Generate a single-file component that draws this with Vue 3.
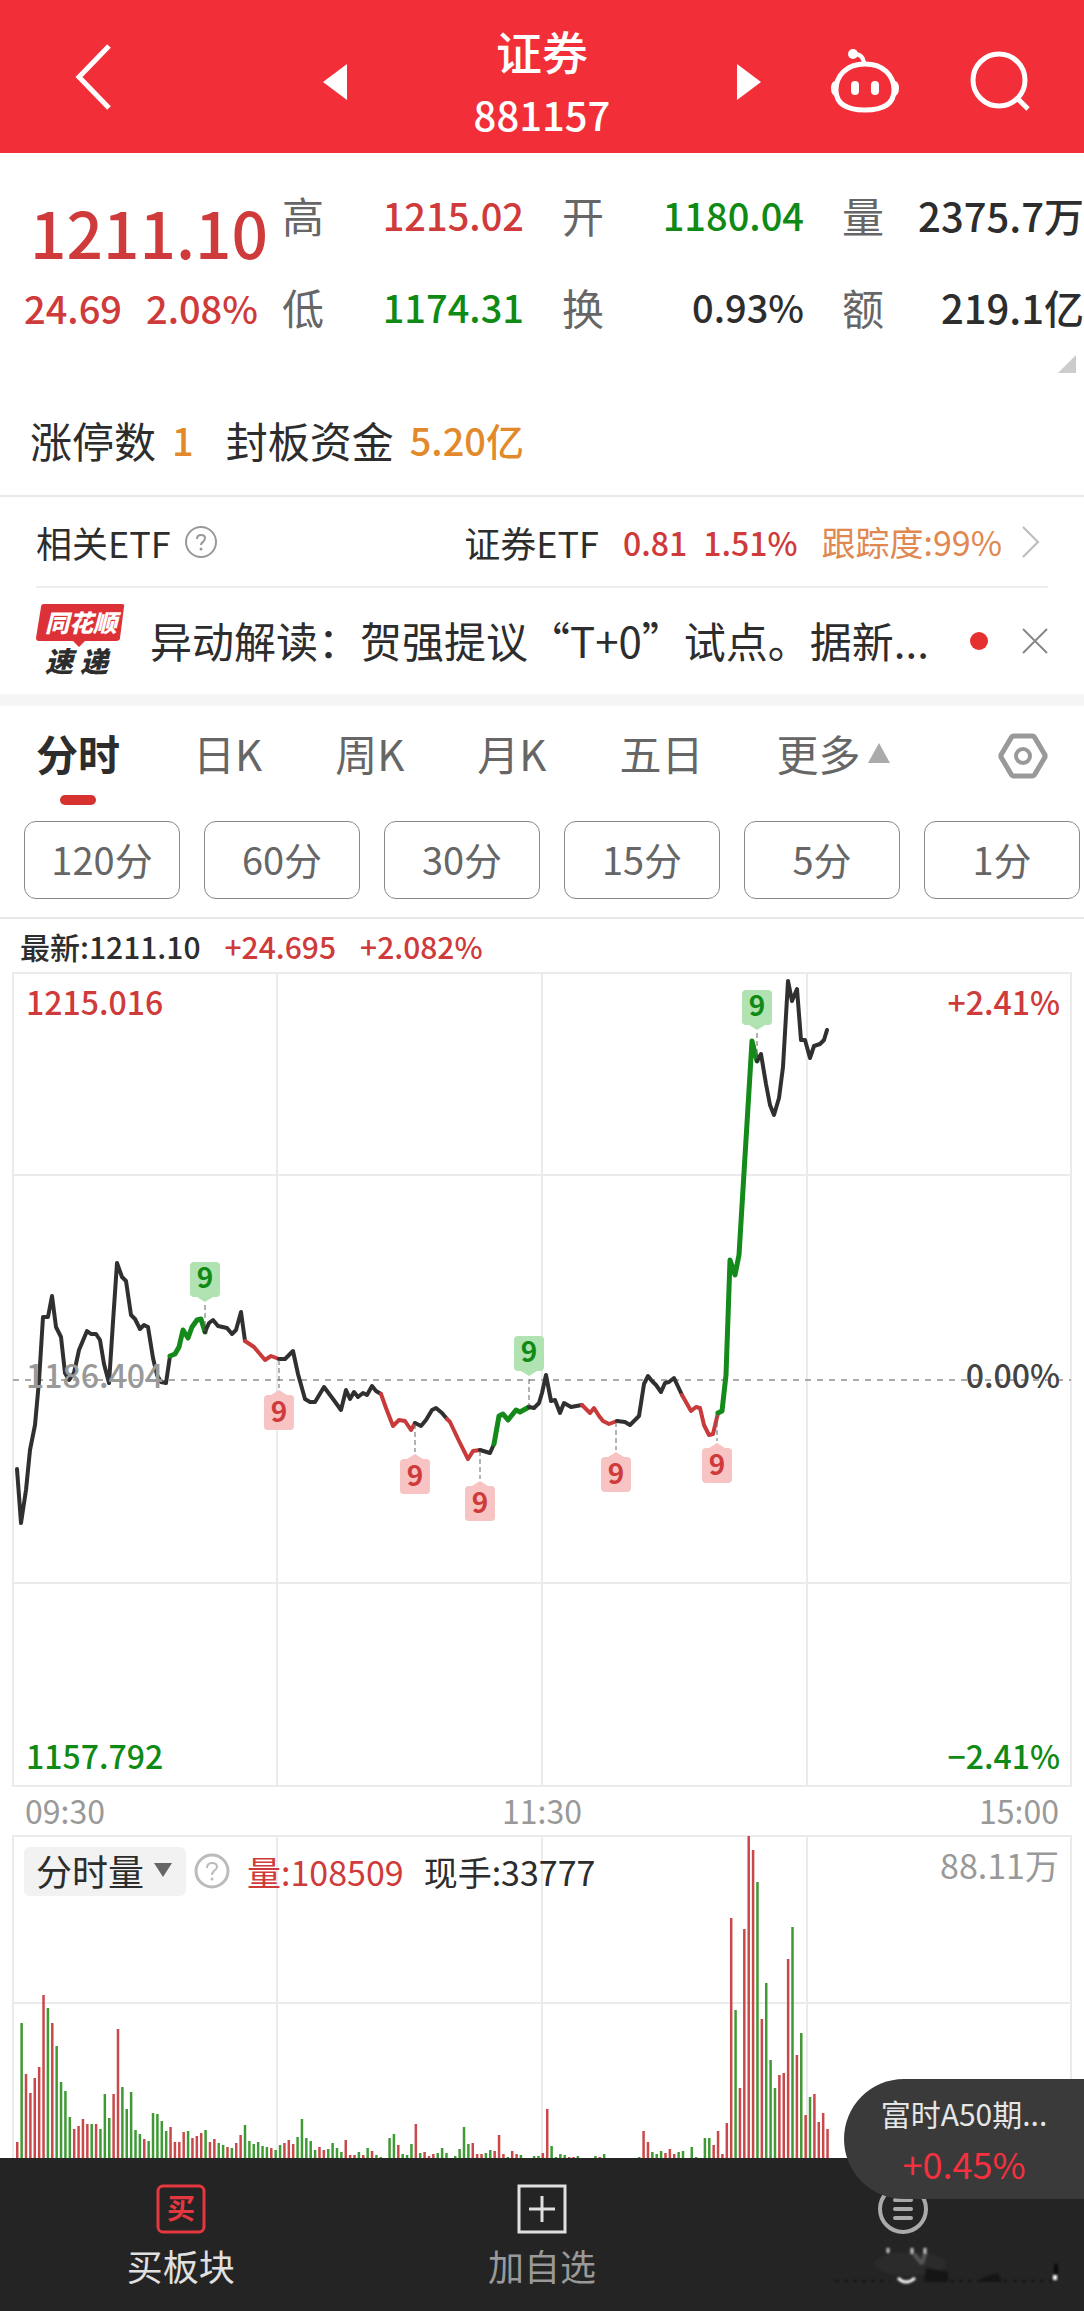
<script setup>
import { ref } from "vue";

const quotes = [
  { label: "高", value: "1215.02", tone: "up" },
  { label: "开", value: "1180.04", tone: "down" },
  { label: "量", value: "2375.7万", tone: "unit" },
  { label: "低", value: "1174.31", tone: "down" },
  { label: "换", value: "0.93%", tone: "" },
  { label: "额", value: "219.1亿", tone: "unit" },
];

const tabs = ["分时", "日K", "周K", "月K", "五日"];
const activeTab = ref("分时");
const periods = ["120分", "60分", "30分", "15分", "5分", "1分"];
const indicator = ref("分时量");

// 分时线，每段一个颜色
const segments = [
  {
    tone: "flat",
    points:
      "4,496 8,550 13,517 17,477 22,452 26,408 30,344 35,344 39,323 43,354 48,364 52,400 56,407 61,400 66,377 74,358 78,361 83,361 87,367 91,391 96,410 100,349 104,290 109,304 113,308 118,342 122,346 127,356 131,352 135,354 140,385 144,402 148,409 153,410 157,383",
  },
  {
    tone: "down",
    points: "157,383 162,381 166,374 170,357 175,365 179,354 184,347 188,346 192,359",
  },
  {
    tone: "flat",
    points: "192,359 196,350 200,347 205,353 214,355 219,361 223,357 228,339 232,368",
  },
  { tone: "up", points: "232,368 241,374 252,387 258,383 266,386" },
  {
    tone: "flat",
    points:
      "266,386 272,386 280,378 285,401 292,426 297,429 302,429 311,414 320,426 328,437 333,417 337,426 341,419 345,424 350,420 354,422 359,413 363,418 368,421",
  },
  { tone: "up", points: "368,421 373,435 380,453 386,447 392,448 398,457 402,450" },
  { tone: "flat", points: "402,450 408,453 413,447 419,437 423,435 429,440 434,446" },
  { tone: "up", points: "434,446 437,449 446,468 455,486 460,478 467,477" },
  { tone: "flat", points: "467,477 477,480 481,471" },
  { tone: "down", points: "481,471 486,443 490,441 495,447 503,437 507,439 516,434" },
  {
    tone: "flat",
    points: "516,434 521,435 526,430 529,420 533,402 538,428 542,427 547,440 551,430 558,434 569,432",
  },
  { tone: "up", points: "569,432 577,440 581,435 586,443 590,448 596,451 604,448" },
  {
    tone: "flat",
    points:
      "604,448 612,449 617,452 626,443 631,411 635,403 639,408 643,412 648,419 652,410 656,409 661,405 669,422",
  },
  { tone: "up", points: "669,422 678,438 683,434 687,435 691,452 696,462 700,461 705,440" },
  { tone: "down", points: "705,440 709,438 713,402 717,287 722,302 726,282 739,68 744,88" },
  {
    tone: "flat",
    points:
      "744,88 748,81 753,111 757,132 761,142 766,125 770,94 775,8 779,28 784,16 788,67 792,67 797,85 801,73 807,71 811,67 814,57",
  },
];

// 九转标记：tip 为箭头尖端，line 为虚线到达的价格位置
const marks = [
  { x: 192, tip: 329, line: 358, tone: "down" },
  { x: 516, tip: 403, line: 433, tone: "down" },
  { x: 744, tip: 57, line: 85, tone: "down" },
  { x: 266, tip: 417, line: 387, tone: "up" },
  { x: 402, tip: 481, line: 451, tone: "up" },
  { x: 467, tip: 508, line: 478, tone: "up" },
  { x: 603, tip: 479, line: 449, tone: "up" },
  { x: 704, tip: 470, line: 441, tone: "up" },
];

// 每分钟成交量，r 涨 g 跌
const volumes =
  "r16 g135 r84 r65 r80 r91 r163 g150 r135 g112 g76 g67 g41 r29 r32 r39 r34 g34 r34 g29 g64 g40 r64 r129 g71 g49 g66 g28 g24 r19 g17 g45 g44 g37 g27 r31 r16 r16 r26 g27 r20 r22 r25 g28 r16 r19 g15 g13 r11 g10 r15 r23 g33 g17 g14 g16 g12 g11 r10 g8 g13 r15 r18 r14 g21 g39 g20 g17 g8 r11 r8 g9 g15 g10 g6 r18 r3 r3 g6 r3 g10 r7 g3 g1 g0 g20 g24 r13 g4 g3 g14 r34 g5 r6 r2 r4 g5 g10 g5 g0 g2 g9 g31 g14 r15 r4 r4 g5 g8 r7 r23 r4 g1 r7 r4 g3 g0 g0 g2 g2 r5 r49 g12 g1 g4 g3 r1 r1 g2 g0 g0 g0 g2 r1 g4 g0 g0 g0 g0 g0 g0 g0 g1 r27 r16 g6 g4 g7 r5 r9 r4 g6 g7 g0 g11 g1 g0 g20 g20 r13 r27 r4 r35 r240 g148 r70 r229 r322 r308 g276 r139 g175 g98 g70 r83 r85 r199 g231 r103 g125 r43 g61 r64 r36 r45 r29";

const bars = volumes.split(" ").map((item, i) => ({
  x: 4 + i * 4.38,
  h: Number(item.slice(1)),
  tone: item[0] === "r" ? "up" : "down",
}));
</script>

<template>
  <div class="page" lang="zh-CN">
    <header class="header">
      <button class="icon-btn back" aria-label="返回">
        <svg width="38" height="66" viewBox="0 0 38 66">
          <path d="M35 2 L5 33 L35 64" fill="none" stroke="#fff" stroke-width="5" />
        </svg>
      </button>
      <div class="switcher">
        <button class="icon-btn" aria-label="上一个">
          <svg width="24" height="36" viewBox="0 0 24 36"><path d="M24 0 V36 L0 18 Z" fill="#fff" /></svg>
        </button>
        <h1 class="title">
          <span class="name">证券</span>
          <span class="code">881157</span>
        </h1>
        <button class="icon-btn" aria-label="下一个">
          <svg width="24" height="36" viewBox="0 0 24 36"><path d="M0 0 V36 L24 18 Z" fill="#fff" /></svg>
        </button>
      </div>
      <div class="tools">
        <button class="icon-btn" aria-label="助手">
          <svg width="70" height="64" viewBox="0 0 70 64">
            <path
              d="M35 15 C54 15 64 27 64 41 C64 55 54 61 35 61 C16 61 6 55 6 41 C6 27 16 15 35 15 Z"
              fill="none"
              stroke="#fff"
              stroke-width="5"
            />
            <path d="M24 5 Q34 5 34 16" fill="none" stroke="#fff" stroke-width="4" />
            <circle cx="23" cy="5" r="5" fill="#fff" />
            <path d="M7 31 Q1 32 1 39 Q1 47 7 48 Z M63 31 Q69 32 69 39 Q69 47 63 48 Z" fill="#fff" />
            <rect x="21" y="32" width="8" height="14" rx="4" fill="#fff" />
            <rect x="41" y="32" width="8" height="14" rx="4" fill="#fff" />
          </svg>
        </button>
        <button class="icon-btn" aria-label="搜索">
          <svg width="60" height="60" viewBox="0 0 60 60">
            <circle cx="29" cy="29" r="26" fill="none" stroke="#fff" stroke-width="5" />
            <path d="M48 48 L58 58" stroke="#fff" stroke-width="5" />
          </svg>
        </button>
      </div>
    </header>

    <section class="quote">
      <div class="price-box">
        <div class="price up">1211.10</div>
        <div class="change up"><span>24.69</span><span>2.08%</span></div>
      </div>
      <dl class="stats">
        <div v-for="q in quotes" :key="q.label" class="stat">
          <dt>{{ q.label }}</dt>
          <dd :class="q.tone">{{ q.value }}</dd>
        </div>
      </dl>
    </section>
    <div class="expand">
      <svg width="18" height="18" viewBox="0 0 18 18"><path d="M18 0 V18 H0 Z" fill="#ccc" /></svg>
    </div>

    <section class="limit">
      <span>涨停数</span>
      <span class="num">1</span>
      <span class="fund">封板资金</span>
      <span class="num">5.20亿</span>
    </section>

    <section class="etf">
      <span>相关ETF</span>
      <button class="icon-btn help" aria-label="说明">
        <svg width="32" height="32" viewBox="0 0 32 32">
          <circle cx="16" cy="16" r="15" fill="none" stroke="#999" stroke-width="2" />
          <path
            d="M12 13 Q12 9 16 9 Q20 9 20 12 Q20 14 18 16 Q16 17 16 19"
            fill="none"
            stroke="#999"
            stroke-width="2"
          />
          <circle cx="16" cy="23" r="1.5" fill="#999" />
        </svg>
      </button>
      <a class="etf-link" href="#">
        <span>证券ETF</span>
        <span class="up etf-price"><span>0.81</span><span>1.51%</span></span>
        <span class="track">跟踪度:99%</span>
        <svg width="18" height="32" viewBox="0 0 18 32">
          <path d="M1 1 L16 16 L1 31" fill="none" stroke="#bbb" stroke-width="2" />
        </svg>
      </a>
    </section>

    <section class="news">
      <svg class="logo" width="90" height="84" viewBox="0 -5 90 84">
        <path
          d="M8 0 H86 Q89 0 88 3 L84 34 Q84 37 80 37 H49 L43 43 L37 37 H3 Q0 37 0 34 L5 3 Q5 0 8 0 Z"
          fill="#dc3237"
        />
        <text x="9" y="28" class="logo-top">同花顺</text>
        <text x="9" y="68" class="logo-bottom">速</text>
        <text x="44" y="68" class="logo-bottom">递</text>
      </svg>
      <a class="news-text" href="#">异动解读：贺强提议“T+0”试点。据新...</a>
      <span class="dot"></span>
      <button class="icon-btn close" aria-label="关闭">
        <svg width="26" height="26" viewBox="0 0 26 26">
          <path d="M1 1 L25 25 M25 1 L1 25" stroke="#888" stroke-width="2" />
        </svg>
      </button>
    </section>

    <nav class="tabs">
      <button
        v-for="tab in tabs"
        :key="tab"
        class="tab"
        :class="{ active: activeTab === tab }"
        @click="activeTab = tab"
      >
        {{ tab }}
      </button>
      <button class="tab more">
        更多
        <svg width="22" height="20" viewBox="0 0 22 20"><path d="M11 0 L22 20 H0 Z" fill="#aaa" /></svg>
      </button>
      <button class="icon-btn setting" aria-label="设置">
        <svg width="50" height="46" viewBox="0 0 50 46">
          <path
            d="M16 3 H34 Q36 3 37 5 L47 22 Q47 23 47 24 L37 41 Q36 43 34 43 H16 Q14 43 13 41 L3 24 Q3 23 3 22 L13 5 Q14 3 16 3 Z"
            fill="none"
            stroke="#999"
            stroke-width="5"
          />
          <circle cx="25" cy="23" r="7" fill="none" stroke="#999" stroke-width="4" />
        </svg>
      </button>
    </nav>

    <div class="periods">
      <button v-for="p in periods" :key="p" class="period">{{ p }}</button>
    </div>

    <div class="latest">
      <span>最新:1211.10</span>
      <span class="up">+24.695</span>
      <span class="up">+2.082%</span>
    </div>

    <section class="charts">
      <svg class="chart" viewBox="0 0 1058 814">
        <g class="grid">
          <path d="M0 0 H1058 V813 H0 Z" />
          <path d="M0 202 H1058 M0 610 H1058 M264 0 V813 M529 0 V813 M794 0 V813" />
        </g>
        <path class="zero" d="M0 407 H1058" />
        <polyline v-for="(s, i) in segments" :key="i" class="line" :class="s.tone" :points="s.points" />
        <g v-for="m in marks" :key="m.x" class="mark" :class="m.tone">
          <path
            class="lead"
            :d="m.tone === 'down' ? `M${m.x} ${m.tip + 3} V${m.line}` : `M${m.x} ${m.line} V${m.tip - 2}`"
          />
          <template v-if="m.tone === 'down'">
            <rect :x="m.x - 15" :y="m.tip - 40" width="30" height="35" rx="4" />
            <path class="tip" :d="`M${m.x - 8} ${m.tip - 5} h16 l-8 5 Z`" />
            <text :x="m.x" :y="m.tip - 14">9</text>
          </template>
          <template v-else>
            <rect :x="m.x - 15" :y="m.tip + 5" width="30" height="35" rx="4" />
            <path class="tip" :d="`M${m.x - 8} ${m.tip + 5} h16 l-8 -5 Z`" />
            <text :x="m.x" :y="m.tip + 32">9</text>
          </template>
        </g>
        <text class="label up" x="13" y="42">1215.016</text>
        <text class="label mid" x="13" y="415">1186.404</text>
        <text class="label down" x="13" y="796">1157.792</text>
        <text class="label end up" x="1047" y="42">+2.41%</text>
        <text class="label end base" x="1047" y="415">0.00%</text>
        <text class="label end down" x="1047" y="796">−2.41%</text>
      </svg>

      <div class="axis"><span>09:30</span><span>11:30</span><span>15:00</span></div>

      <div class="volume">
        <svg class="chart" viewBox="0 0 1058 322">
          <g class="grid">
            <path d="M0 322 V0 H1058 V322" />
            <path d="M0 167 H1058 M264 0 V322 M529 0 V322 M794 0 V322" />
          </g>
          <rect
            v-for="(b, i) in bars"
            :key="i"
            class="bar"
            :class="b.tone"
            :x="b.x - 1"
            :y="322 - b.h"
            width="2.5"
            :height="b.h"
          />
        </svg>
        <div class="legend">
          <div class="picker">
            <select v-model="indicator" aria-label="指标">
              <option>分时量</option>
              <option>量比</option>
            </select>
            <svg width="18" height="14" viewBox="0 0 18 14"><path d="M0 0 H18 L9 14 Z" fill="#666" /></svg>
          </div>
          <button class="icon-btn help" aria-label="指标说明">
            <svg width="36" height="36" viewBox="0 0 36 36">
              <circle cx="18" cy="18" r="16" fill="none" stroke="#bbb" stroke-width="3" />
              <path
                d="M13 15 Q13 10 18 10 Q23 10 23 14 Q23 16 20 18 Q18 20 18 22"
                fill="none"
                stroke="#bbb"
                stroke-width="2"
              />
              <circle cx="18" cy="26" r="1.5" fill="#bbb" />
            </svg>
          </button>
          <span class="up vol">量:108509</span>
          <span>现手:33777</span>
          <span class="max">88.11万</span>
        </div>
      </div>
    </section>

    <nav class="bottom">
      <a href="#" class="item buy">
        <svg width="50" height="50" viewBox="0 0 50 50">
          <rect x="2" y="2" width="46" height="46" rx="5" fill="none" stroke="#e5373f" stroke-width="3" />
          <text x="25" y="35" class="buy-text">买</text>
        </svg>
        <span>买板块</span>
      </a>
      <a href="#" class="item add">
        <svg width="50" height="50" viewBox="0 0 50 50">
          <path d="M2 2 H48 V48 H2 Z M25 12 V38 M12 25 H38" fill="none" stroke="#e0e0e0" stroke-width="3" />
        </svg>
        <span>加自选</span>
      </a>
      <a href="#" class="item" aria-label="更多功能">
        <svg width="52" height="50" viewBox="0 0 52 50">
          <circle cx="26" cy="25" r="23" fill="none" stroke="#aaa" stroke-width="4" />
          <path
            d="M18 16 H34 M18 25 H34 M18 34 H34"
            stroke="#aaa"
            stroke-width="4"
            stroke-linecap="round"
          />
        </svg>
        <svg class="smudge" width="230" height="50" viewBox="0 0 230 50">
          <g class="soft">
            <ellipse cx="80" cy="24" rx="36" ry="12" fill="#2b2b2b" />
            <path d="M58 8 V13 M82 8 V14 M95 8 V14" stroke="#ccc" stroke-width="3" />
            <path d="M95 14 L92 24 M84 14 L92 24" stroke="#555" stroke-width="4" />
            <path d="M96 28 L118 32 V42 H94 Z M152 38 L168 33 L172 42 H150 Z" fill="#151515" />
            <path d="M5 41 H60 M120 41 H222" stroke="#141414" stroke-width="2" stroke-dasharray="4 5" />
            <path d="M68 38 Q76 46 85 38" fill="none" stroke="#fff" stroke-width="3" />
            <path d="M226 24 V34" stroke="#0a0a0a" stroke-width="4" />
            <path d="M225 35 V40" stroke="#fff" stroke-width="4" />
          </g>
        </svg>
      </a>
    </nav>

    <a class="float" href="#">
      <span class="float-name">富时A50期...</span>
      <span class="float-rate">+0.45%</span>
    </a>
  </div>
</template>

<style>
body {
  margin: 0;
  background: #fff;
}
</style>

<style scoped>
.page {
  position: relative;
  font-family: "Noto Sans CJK SC", sans-serif;
  color: #2d2d2d;
  background: #fff;
  overflow: hidden;
}

button,
select {
  font: inherit;
  color: inherit;
  background: none;
  border: none;
  padding: 0;
  cursor: pointer;
}

a {
  color: inherit;
  text-decoration: none;
}

svg {
  display: block;
}

.up {
  color: #cf3a3a;
}

.down {
  color: #0f8a14;
}

/* 顶部 */
.header {
  display: grid;
  grid-template-columns: 1fr auto 1fr;
  align-items: center;
  height: 153px;
  padding: 0 54px;
  background: #f22f38;
  color: #fff;
}

.back {
  justify-self: start;
  margin-left: 20px;
}

.switcher {
  display: flex;
  align-items: center;
  justify-content: space-between;
  width: 438px;
  padding-top: 10px;
}

.title {
  display: flex;
  flex-direction: column;
  align-items: center;
  margin: 0;
  font-weight: 500;
}

.name {
  font-size: 46px;
  line-height: 64px;
}

.code {
  font-size: 40px;
  line-height: 64px;
}

.tools {
  display: flex;
  align-items: center;
  justify-content: flex-end;
  gap: 70px;
  padding-top: 8px;
}

/* 报价 */
.quote {
  display: flex;
  align-items: flex-end;
  padding-top: 32px;
}

.price-box {
  width: 282px;
  flex: none;
}

.price {
  padding-left: 30px;
  font-size: 64px;
  font-weight: 500;
  line-height: 84px;
}

.change {
  display: flex;
  gap: 24px;
  padding: 6px 0 0 24px;
  font-size: 38px;
  font-weight: 500;
  line-height: 58px;
}

.stats {
  flex: 1;
  display: grid;
  grid-template-columns: repeat(3, 1fr);
  gap: 32px 38px;
  margin: 0;
  font-size: 38px;
  line-height: 60px;
}

.stat {
  display: flex;
  justify-content: space-between;
  white-space: nowrap;
}

.stat dt {
  color: #666;
  font-size: 42px;
}

.stat dd {
  margin: 0;
  font-weight: 500;
}

.stat .unit {
  font-size: 40px;
}

.expand {
  display: flex;
  justify-content: flex-end;
  padding: 18px 8px 0 0;
}

.limit {
  display: flex;
  align-items: center;
  padding: 37px 30px 25px;
  border-bottom: 2px solid #e8e8e8;
  font-size: 42px;
  line-height: 60px;
}

.limit .num {
  margin-left: 16px;
  color: #e28a2b;
  font-size: 38px;
  font-weight: 500;
}

.fund {
  margin-left: 32px;
}

.etf {
  display: flex;
  align-items: center;
  height: 89px;
  margin: 0 36px;
  border-bottom: 2px solid #eee;
  font-size: 36px;
}

.etf .help {
  margin-left: 14px;
}

.etf-link {
  display: flex;
  align-items: center;
  margin-left: auto;
  padding-right: 8px;
}

.etf-price {
  display: flex;
  gap: 16px;
  margin: 0 24px;
  font-size: 32px;
  font-weight: 500;
}

.track {
  margin-right: 20px;
  color: #e08850;
  font-size: 34px;
}

.news {
  display: flex;
  align-items: center;
  height: 106px;
  padding: 0 36px;
  border-bottom: 12px solid #f5f5f5;
  font-size: 42px;
}

.logo-top {
  fill: #fff;
  font-size: 24px;
  font-style: italic;
  font-weight: 900;
}

.logo-bottom {
  fill: #2d2d2d;
  font-size: 28px;
  font-style: italic;
  font-weight: 900;
}

.news-text {
  flex: 1;
  margin-left: 24px;
  padding-bottom: 4px;
  white-space: nowrap;
  overflow: hidden;
}

.dot {
  width: 18px;
  height: 18px;
  margin-right: 34px;
  border-radius: 50%;
  background: #e5302f;
}

/* 周期切换 */
.tabs {
  display: flex;
  align-items: center;
  gap: 73px;
  height: 99px;
  padding: 0 36px;
  color: #666;
  font-size: 42px;
}

.tab {
  position: relative;
  height: 99px;
  padding-bottom: 6px;
}

.tab.active {
  color: #2d2d2d;
  font-weight: 700;
}

.tab.active::after {
  content: "";
  position: absolute;
  left: 50%;
  bottom: 0;
  width: 36px;
  height: 10px;
  margin-left: -18px;
  border-radius: 5px;
  background: #d6322f;
}

.more {
  display: flex;
  align-items: center;
  gap: 8px;
}

.setting {
  margin-left: auto;
}

.periods {
  display: grid;
  grid-template-columns: repeat(6, 1fr);
  gap: 24px;
  padding: 16px 4px 18px 24px;
  border-bottom: 2px solid #e8e8e8;
}

.period {
  height: 78px;
  padding-bottom: 4px;
  border: 1px solid #888;
  border-radius: 12px;
  color: #666;
  font-size: 38px;
}

.latest {
  display: flex;
  align-items: center;
  gap: 24px;
  height: 54px;
  padding-left: 20px;
  font-size: 30px;
  font-weight: 500;
}

/* 图表 */
.charts {
  margin: 0 13px;
}

.chart {
  width: 100%;
  height: auto;
  overflow: visible;
}

.grid path {
  fill: none;
  stroke: #ebebeb;
  stroke-width: 2;
}

.zero {
  stroke: #aaa;
  stroke-width: 2;
  stroke-dasharray: 6 6;
}

.line {
  fill: none;
  stroke-width: 4;
  stroke-linejoin: round;
  stroke-linecap: round;
}

.line.flat {
  stroke: #303030;
}

.line.up {
  stroke: #c93a3a;
}

.line.down {
  stroke: #148a1a;
  stroke-width: 5;
}

.mark rect,
.mark .tip {
  fill: #f7c3c3;
}

.mark.down rect,
.mark.down .tip {
  fill: #b0e2b2;
}

.mark text {
  fill: currentColor;
  font-size: 28px;
  font-weight: 700;
  text-anchor: middle;
}

.lead {
  stroke: #666;
  stroke-width: 1;
  stroke-dasharray: 5 3;
}

.label {
  fill: currentColor;
  font-size: 32px;
  font-weight: 500;
}

.label.end {
  text-anchor: end;
}

.label.mid {
  color: #999;
}

.label.base {
  color: #444;
}

.axis {
  display: flex;
  align-items: center;
  justify-content: space-between;
  height: 45px;
  padding: 0 12px 4px;
  color: #999;
  font-size: 32px;
}

.volume {
  position: relative;
}

.bar.up {
  fill: #c9484a;
}

.bar.down {
  fill: #3f9a35;
}

.legend {
  position: absolute;
  top: 12px;
  left: 11px;
  right: 12px;
  display: flex;
  align-items: center;
  height: 46px;
  font-size: 34px;
}

.picker {
  position: relative;
  background: #f2f2f2;
  border-radius: 6px;
}

.picker select {
  appearance: none;
  width: 162px;
  height: 46px;
  padding-left: 12px;
  font-size: 36px;
  line-height: 44px;
}

.picker svg {
  position: absolute;
  right: 14px;
  top: 16px;
  pointer-events: none;
}

.legend .help {
  margin-left: 8px;
}

.vol {
  margin: 0 20px 0 17px;
}

.max {
  align-self: flex-start;
  margin-left: auto;
  color: #999;
  line-height: 34px;
}

/* 底部 */
.bottom {
  position: relative;
  display: grid;
  grid-template-columns: repeat(3, 1fr);
  height: 153px;
  background: #242424;
  font-size: 36px;
}

.item {
  display: flex;
  flex-direction: column;
  align-items: center;
  gap: 6px;
  padding-top: 26px;
  line-height: 50px;
}

.buy {
  color: #e0e0e0;
}

.add {
  color: #999;
}

.buy-text {
  fill: #e5373f;
  font-size: 28px;
  font-weight: 700;
  text-anchor: middle;
}

.smudge {
  align-self: flex-start;
  margin-left: 107px;
}

.soft {
  filter: blur(1px);
}

.float {
  position: absolute;
  right: 0;
  bottom: 112px;
  display: flex;
  flex-direction: column;
  align-items: center;
  justify-content: center;
  width: 240px;
  height: 120px;
  border-radius: 60px 0 0 60px;
  background: #3a3a3a;
}

.float-name {
  color: #e6e6e6;
  font-size: 30px;
  line-height: 48px;
}

.float-rate {
  color: #f5303f;
  font-size: 36px;
  line-height: 52px;
}
</style>
